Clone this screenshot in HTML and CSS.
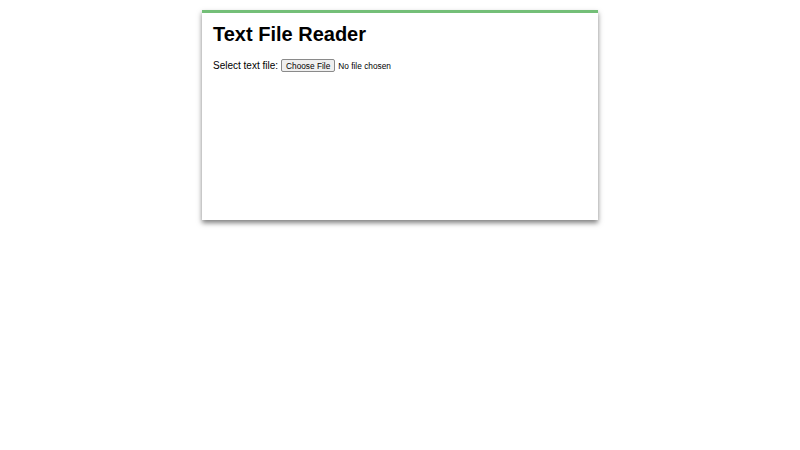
FILE: index.html
```html
<!DOCTYPE html>
<html lang="en">
<head>
<meta charset="utf-8">
<title>Text File Reader</title>
<link rel="stylesheet" href="styles.css">
</head>
<body>
  <main class="reader">
    <h1 class="reader-title">Text File Reader</h1>
    <div class="picker">
      <label class="picker-label" for="file">Select text file:</label>
      <input class="picker-input" type="file" id="file" accept=".txt,text/plain">
    </div>
    <pre class="output"></pre>
  </main>
</body>
</html>
```
FILE: styles.css
```css
html, body {
  margin: 0;
  background: #ffffff;
}

body {
  min-height: 100vh;
  padding-top: 10px;
  box-sizing: border-box;
  font-family: "Liberation Sans", Arial, sans-serif;
  color: #000;
}

.reader {
  box-sizing: border-box;
  width: 396px;
  min-height: 210px;
  margin: 0 auto;
  padding: 10px 11px;
  background: #fff;
  border-top: 3px solid #74bf78;
  box-shadow: 0 3px 5px rgba(0, 0, 0, 0.5);
}

.reader-title {
  margin: 0 0 13px;
  font-size: 20px;
  font-weight: bold;
  line-height: 23px;
}

.picker {
  display: flex;
  align-items: center;
  gap: 3px;
  font-size: 10px;
}

.picker-input {
  font-family: "Liberation Sans", Arial, sans-serif;
  font-size: 8.3px;
}

.picker-input::file-selector-button {
  font: inherit;
  height: 13px;
  padding: 0 4px;
  margin-right: 3px;
  border: 1px solid #8a8a8a;
  border-radius: 2px;
  background: #efefef;
  color: #000;
}

.output {
  margin: 0;
  white-space: pre-wrap;
}
```
